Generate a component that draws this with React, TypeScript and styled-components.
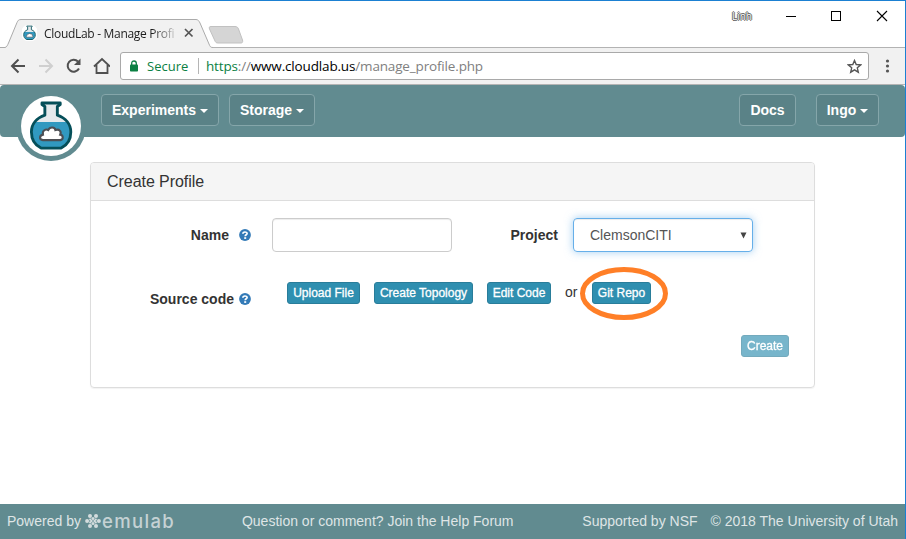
import React from "react";
import styled, { createGlobalStyle } from "styled-components";

const Global = createGlobalStyle`
  * { box-sizing: border-box; }
  body { margin: 0; background: #fff; }
`;

const Window = styled.div`
  width: 906px;
  height: 539px;
  overflow: hidden;
  display: flex;
  flex-direction: column;
  background: #fff;
  border-top: 1px solid #1b80d2;
  border-right: 1px solid #1b80d2;
  font-family: "Liberation Sans", Arial, sans-serif;
  font-size: 14px;
  line-height: 20px;
  color: #333;
`;

/* ---- browser chrome ---- */
const TabStrip = styled.div`
  position: relative;
  height: 47px;
  flex: none;
  display: flex;
  align-items: flex-start;
  border-bottom: 1px solid #b3b3b3;
`;
const TabShapes = styled.svg`
  position: absolute;
  left: 0;
  top: 17px;
`;
const TabContent = styled.div`
  position: relative;
  display: flex;
  align-items: center;
  height: 30px;
  margin: 17px 0 0 22px;
  width: 180px;
`;
const TabTitle = styled.span`
  width: 133px;
  margin: 0 7px 0 7px;
  white-space: nowrap;
  font: 12px/20px "Open Sans", sans-serif;
  letter-spacing: -0.3px;
  padding-top: 2px;
  color: #1d1d1d;
  mask-image: linear-gradient(90deg, #000 108px, transparent 136px);
`;
const WindowControls = styled.div`
  display: flex;
  align-items: center;
  height: 30px;
  margin-left: auto;
  padding-right: 17px;
`;
const UserTag = styled.span`
  margin-right: 34px;
  font: 10px/14px "Open Sans", sans-serif;
  color: #fff;
  text-shadow: 0 0 1px #222, 1px 0 0 #777, -1px 0 0 #777, 0 1px 0 #666, 0 -1px 0 #666;
`;
const Toolbar = styled.div`
  height: 37px;
  flex: none;
  display: flex;
  align-items: center;
  padding-left: 10px;
  background: #f1f1f1;
  border-bottom: 1px solid #b4b4b4;
`;
const NavIcons = styled.svg`
  flex: none;
  margin-right: 10px;
`;
const AddressBar = styled.div`
  width: 749px;
  height: 28px;
  display: flex;
  align-items: center;
  padding: 0 6px 0 9px;
  background: #fff;
  border: 1px solid #a9a9a9;
  border-radius: 3px;
  font: 13.5px/20px "Open Sans", sans-serif;
`;
const Secure = styled.span`
  margin-left: 8px;
  width: 43px;
  white-space: nowrap;
  font-size: 13px;
  color: #0b8043;
`;
const Separator = styled.i`
  width: 1px;
  height: 16px;
  margin: 0 7px 0 8px;
  background: #b5b5b5;
`;
const Url = styled.span`
  white-space: nowrap;
  letter-spacing: -0.16px;
  color: #808080;
  b { font-weight: 400; color: #000; }
  em { font-style: normal; color: #0b8043; }
`;
const StarIcon = styled.svg`
  margin-left: auto;
`;
const MenuDots = styled.svg`
  margin-left: 15px;
`;

/* ---- site header ---- */
const Navbar = styled.header`
  position: relative;
  height: 52px;
  flex: none;
  display: flex;
  align-items: flex-start;
  gap: 10px;
  padding: 9px 26px 0 101px;
  background: #618b90;
  border-radius: 4px;
`;
const Brand = styled.svg`
  position: absolute;
  left: 16px;
  top: 6px;
`;
const NavButton = styled.button<{ $width: number; $push?: boolean; $gap?: number }>`
  width: ${(p) => p.$width}px;
  height: 32px;
  margin-left: ${(p) => (p.$push ? "auto" : `${p.$gap ?? 0}px`)};
  padding: 0;
  display: flex;
  align-items: center;
  justify-content: center;
  gap: 4px;
  white-space: nowrap;
  background: #5a8287;
  border: 1px solid #85a6aa;
  border-radius: 4px;
  color: #fff;
  font: bold 14px/20px "Liberation Sans", Arial, sans-serif;
`;
const Caret = styled.i`
  margin-top: 2px;
  border: 4px solid transparent;
  border-top-color: #fff;
  border-bottom: 0;
`;

/* ---- form panel ---- */
const Main = styled.main`
  flex: 1;
  padding: 25px 0 0 90px;
`;
const Panel = styled.section`
  width: 725px;
  height: 226px;
  border: 1px solid #ddd;
  border-radius: 4px;
  box-shadow: 0 1px 1px rgba(0, 0, 0, 0.05);
`;
const PanelTitle = styled.h1`
  height: 38px;
  margin: 0;
  padding: 0 16px;
  background: #f5f5f5;
  border-bottom: 1px solid #ddd;
  border-radius: 3px 3px 0 0;
  font: 16px/37px "Liberation Sans", Arial, sans-serif;
  letter-spacing: -0.05px;
  color: #333;
`;
const FieldRow = styled.div`
  display: flex;
  align-items: center;
  height: 34px;
  margin-top: 17px;
`;
const Label = styled.label<{ $width: number; $gap: number }>`
  width: ${(p) => p.$width}px;
  display: flex;
  align-items: center;
  justify-content: flex-end;
  gap: ${(p) => p.$gap}px;
  white-space: nowrap;
  font-weight: bold;
`;
const TextField = styled.input`
  width: 180px;
  height: 34px;
  margin-left: 21px;
  padding: 6px 12px;
  border: 1px solid #ccc;
  border-radius: 4px;
  box-shadow: inset 0 1px 1px rgba(0, 0, 0, 0.075);
`;
const SelectField = styled.div`
  width: 180px;
  height: 34px;
  margin-left: 15px;
  padding: 0 5px 0 16px;
  display: flex;
  align-items: center;
  justify-content: space-between;
  border: 1px solid #66afe9;
  border-radius: 4px;
  box-shadow: inset 0 1px 1px rgba(0, 0, 0, 0.075), 0 0 8px rgba(102, 175, 233, 0.6);
  color: #555;
`;
const SourceRow = styled.div`
  display: flex;
  align-items: flex-start;
  height: 37px;
  margin-top: 30px;
`;
const SourceLabel = styled(Label)`
  margin: 7px 36px 0 0;
`;
const Action = styled.button<{ $width: number; $muted?: boolean }>`
  width: ${(p) => p.$width}px;
  height: 22px;
  padding: 0;
  background: #2f8fb0;
  border: 1px solid #297d9a;
  border-radius: 3px;
  color: #fff;
  white-space: nowrap;
  text-align: center;
  font: 12px/18px "Liberation Sans", Arial, sans-serif;
  -webkit-text-stroke: 0.3px #fff;
  opacity: ${(p) => (p.$muted ? 0.65 : 1)};
`;
const ActionGroup = styled.div`
  display: flex;
  gap: 14px;
`;
const Or = styled.span`
  width: 13px;
`;
const Highlighted = styled.div`
  position: relative;
  height: 22px;
`;
const Ring = styled.svg`
  position: absolute;
  left: -13px;
  top: -16px;
`;
const SubmitRow = styled.div`
  display: flex;
  justify-content: flex-end;
  padding-right: 25px;
  margin-top: 16px;
`;

/* ---- footer ---- */
const Footer = styled.footer`
  height: 35px;
  flex: none;
  display: flex;
  align-items: center;
  padding: 0 7px 2px;
  background: #618b90;
  color: #dfe5e6;
  white-space: nowrap;
`;
const Emulab = styled.span`
  display: flex;
  align-items: center;
  gap: 1px;
  width: 157px;
  margin-left: 4px;
  padding-top: 1px;
  font: 500 18.5px/20px Inter, sans-serif;
  letter-spacing: 1.35px;
  color: #c5d2d4;
`;
const Support = styled.span`
  margin: 0 13px 0 auto;
`;

const Flask = () => (
  <>
    <path d="M18 35.500H52C57 45 54.500 57 45.500 62.500H24.500C15.500 57 13 45 18 35.500Z" fill="#3199c0" />
    <path d="M26 16H44L42 18V28C46 30 50 32 52 35.500H18C20 32 24 30 28 28V18Z" fill="#e4e9ec" />
    <path d="M25.500 15.800H44.500V17.500L41.500 19.500V28.500C50 31.500 55.500 38 55.500 46C55.500 54 51 60 45.500 62.800H24.500C19 60 14.500 54 14.500 46C14.500 38 20 31.500 28.500 28.500V19.500L25.500 17.500Z" fill="none" stroke="#054f59" strokeWidth="3" strokeLinejoin="round" />
    <path d="M26.500 54.500C22 54 23 49.500 26.500 48.800C25.500 44.500 29.500 42.500 32 44C34 40 39 41 39.500 44C43.500 42.500 46 45.500 44.500 48.800C48 49.500 48 54 44.500 54.500Z" fill="#fff" stroke="#4c4f54" strokeWidth="2.200" />
  </>
);

const Help = () => (
  <svg width="12" height="12" viewBox="0 0 12 12">
    <circle cx="6" cy="6" r="5.900" fill="#337ab7" />
    <path d="M3.900 4.700C3.900 2.500 8.100 2.500 8.100 4.500C8.100 5.900 6.200 5.700 6.200 7.300" fill="none" stroke="#fff" strokeWidth="1.700" />
    <path d="M5.200 8.200h2v1.700h-2z" fill="#fff" />
  </svg>
);

export default function App() {
  return (
    <Window>
      <Global />
      <TabStrip>
        <TabShapes width="250" height="30">
          <path d="M5 29.500C7 29 7.500 27 8.500 25L17 4.500C18 2.500 18.500 1.500 21 1.500H196C198 1.500 199 3 200 5L209 26C210 28.500 210.500 29.500 213 29.500V30H5Z" fill="#f1f1f1" />
          <path d="M0 29.500H5C7 29 7.500 27 8.500 25L17 4.500C18 2.500 18.500 1.500 21 1.500H196C198 1.500 199 3 200 5L209 26C210 28.500 210.500 29.500 213 29.500" fill="none" stroke="#ababab" />
          <path d="M211 8.500H235C237 8.500 238 9.500 238.500 11L242.500 22C243 24 242.500 25 241 25H218C216 25 215.500 24 215 23L209.500 11C209 9.500 209 8.500 211 8.500Z" fill="#d5d5d5" stroke="#c1c1c1" />
        </TabShapes>
        <TabContent>
          <svg width="15" height="16" viewBox="9 12 52 56"><circle cx="35" cy="40" r="30" fill="#fff" /><Flask /></svg>
          <TabTitle>CloudLab - Manage Profi</TabTitle>
          <svg width="10" height="10"><path d="M1 1L8.500 8.500M8.500 1L1 8.500" stroke="#555" strokeWidth="1.700" /></svg>
        </TabContent>
        <WindowControls>
          <UserTag>Linh</UserTag>
          <svg width="102" height="12" shapeRendering="crispEdges">
            <path d="M0 6.500H10" stroke="#000" />
            <rect x="45.500" y="1.500" width="9" height="9" fill="none" stroke="#000" />
            <path d="M91 1L101 11M101 1L91 11" stroke="#000" strokeWidth="1.100" shapeRendering="auto" />
          </svg>
        </WindowControls>
      </TabStrip>
      <Toolbar>
        <NavIcons width="100" height="20" fill="none" stroke="#505050" strokeWidth="2">
          <path d="M15 10H2M8.500 3.500L2 10L8.500 16.500" />
          <path d="M29 10H42M35.500 3.500L42 10L35.500 16.500" stroke="#cfcfcf" />
          <path d="M69 12.500A6 6 0 1 1 68 5.500" />
          <path d="M70.500 2.500V9H64Z" fill="#505050" stroke="none" />
          <path d="M84 10.500L92 3L100 10.500M86.500 9V17H97.500V9" strokeWidth="1.800" />
        </NavIcons>
        <AddressBar>
          <svg width="9" height="12"><rect y="4.500" width="8" height="7" rx=".8" fill="#0b8043" /><path d="M1.700 5V3.300C1.700 .2 6.300 .2 6.300 3.300V5" fill="none" stroke="#0b8043" strokeWidth="1.300" /></svg>
          <Secure>Secure</Secure>
          <Separator />
          <Url><em>https</em>://<b>www.cloudlab.us</b>/manage_profile.php</Url>
          <StarIcon width="15" height="15" viewBox="0 0 15 15"><path d="M7.500 1.500L9.200 5.500L13.700 5.900L10.300 8.800L11.300 13.200L7.500 10.900L3.700 13.200L4.700 8.800L1.300 5.900L5.800 5.500Z" fill="none" stroke="#555" strokeWidth="1.400" /></StarIcon>
        </AddressBar>
        <MenuDots width="6" height="14" fill="#555"><circle cx="3.500" cy="2" r="1.600" /><circle cx="3.500" cy="7" r="1.600" /><circle cx="3.500" cy="12" r="1.600" /></MenuDots>
      </Toolbar>
      <Navbar>
        <Brand width="70" height="72">
          <path d="M0 35A35 35 0 0 0 70 35Z" fill="#618b90" />
          <circle cx="35" cy="35" r="30" fill="#fff" />
          <g transform="translate(1.500 -3.200) scale(.96)"><Flask /></g>
        </Brand>
        <NavButton $width={118}>Experiments<Caret /></NavButton>
        <NavButton $width={86}>Storage<Caret /></NavButton>
        <NavButton $width={57} $push>Docs</NavButton>
        <NavButton $width={63} $gap={10}>Ingo<Caret /></NavButton>
      </Navbar>
      <Main>
        <Panel>
          <PanelTitle>Create Profile</PanelTitle>
          <FieldRow>
            <Label $width={160} $gap={10}>Name <Help /></Label>
            <TextField aria-label="Name" />
            <Label $width={106} $gap={0}>Project</Label>
            <SelectField>
              ClemsonCITI
              <svg width="7" height="7"><path d="M.5 .5H6.500L3.500 6.500Z" fill="#444" /></svg>
            </SelectField>
          </FieldRow>
          <SourceRow>
            <SourceLabel $width={160} $gap={5}>Source code <Help /></SourceLabel>
            <ActionGroup>
              <Action $width={73}>Upload File</Action>
              <Action $width={99}>Create Topology</Action>
              <Action $width={64}>Edit Code</Action>
              <Or>or</Or>
              <Highlighted>
                <Action $width={59}>Git Repo</Action>
                <Ring width="90" height="56"><ellipse cx="45" cy="27.500" rx="41.500" ry="24" fill="none" stroke="#ff7f27" strokeWidth="5" /></Ring>
              </Highlighted>
            </ActionGroup>
          </SourceRow>
          <SubmitRow><Action $width={48} $muted>Create</Action></SubmitRow>
        </Panel>
      </Main>
      <Footer>
        <span>Powered by</span>
        <Emulab>
          <svg width="16" height="16" fill="#d3dcdd">
            <circle cx="5" cy="2.900" r="2" /><circle cx="11" cy="2.900" r="2" />
            <circle cx="2.100" cy="8" r="2" /><circle cx="6.400" cy="8" r="1.200" /><circle cx="9.600" cy="8" r="1.200" /><circle cx="13.900" cy="8" r="2" />
            <circle cx="5" cy="13.100" r="2" /><circle cx="11" cy="13.100" r="2" />
            <circle cx="8" cy="5.500" r="1.500" /><circle cx="8" cy="10.500" r="1.500" />
            <circle cx="5.200" cy="6.600" r="1.100" /><circle cx="10.800" cy="6.600" r="1.100" /><circle cx="5.200" cy="9.400" r="1.100" /><circle cx="10.800" cy="9.400" r="1.100" />
          </svg>
          emulab
        </Emulab>
        <span>Question or comment? Join the Help Forum</span>
        <Support>Supported by NSF</Support>
        <span>© 2018 The University of Utah</span>
      </Footer>
    </Window>
  );
}
